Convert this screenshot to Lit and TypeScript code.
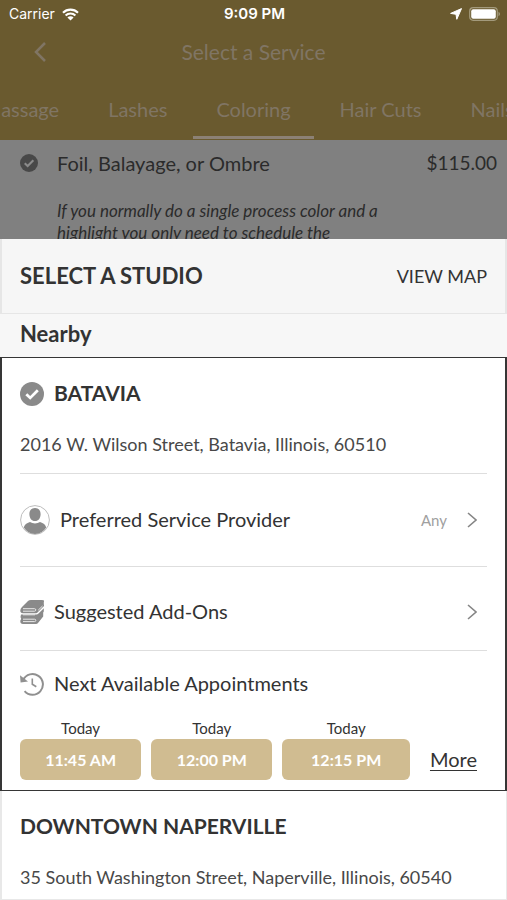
import { LitElement, html, css } from "lit";
import { customElement, property, state } from "lit/decorators.js";
import { classMap } from "lit/directives/class-map.js";

const check = html`<svg class="check" viewBox="0 0 24 24" aria-hidden="true">
  <circle cx="12" cy="12" r="12" fill="currentColor" />
  <path d="M6.3 12.2l3.900 3.700 7.600-7.600" fill="none" stroke="var(--tick, #fff)" stroke-width="2.800" />
</svg>`;

const chevron = html`<svg class="chevron" viewBox="0 0 10 16" aria-hidden="true">
  <path d="M1 1l8 7-8 7" fill="none" stroke="#858585" stroke-width="1.600" />
</svg>`;

const person = html`<svg class="person" viewBox="0 0 30 30" aria-hidden="true">
  <circle cx="15" cy="15" r="14.400" fill="#fff" stroke="#bdbdbd" stroke-width="1" />
  <path d="M15 3c3.600 0 5.800 2.700 5.600 6.400-.2 3.700-2.100 6.600-5.600 6.600s-5.400-2.900-5.600-6.600C9.200 5.700 11.400 3 15 3z" fill="#8a8a8a" />
  <path d="M3.800 22.500c.8-2.900 2.700-4.400 6.200-5.500 2.800 1.900 7.200 1.900 10 0 3.500 1.100 5.400 2.600 6.200 5.500A13.800 13.800 0 0 1 15 29 13.800 13.800 0 0 1 3.800 22.500z" fill="#8a8a8a" />
</svg>`;

const books = html`<svg class="icon" viewBox="0 0 24 24" aria-hidden="true">
  <path d="M11 0H22Q25 0 23.800 2V4.500Q24.500 6 23 7L17.500 12.500Q17 13.300 16 13.300H3Q.3 13.300 .3 10.500 .3 8.800 2 7L8 1Q9 0 11 0z" fill="#8a8a8a" />
  <path d="M1 14.600H16.500Q17.500 14.600 18.500 13.600L23.800 8.300V11.500L23.200 12.500V16.500L18 23Q17.300 24 16 24H3Q.3 24 .3 21.300 .3 20 1.200 19 0 17 1 14.600z" fill="#8a8a8a" />
  <path d="M3 8.700H14.500Q15.800 8.700 15.800 9.900T14.500 11.200H3M3 14.800H15M3 19.200H14.500Q15.800 19.200 15.800 20.400T14.500 21.600H3M18.200 10.200L22.500 6" fill="none" stroke="#e8e8e8" stroke-width="1" />
</svg>`;

const history = html`<svg class="icon" viewBox="0 0 24 24" aria-hidden="true">
  <path d="M3.200 7.800A10.400 10.400 0 1 1 4.600 19.200" fill="none" stroke="#909090" stroke-width="2" />
  <path d="M0 3.200L.6 10.600 8 9.600z" fill="#909090" />
  <path d="M12.300 6.500V12.300L16.300 14.800" fill="none" stroke="#909090" stroke-width="1.600" />
</svg>`;

@customElement("status-bar")
export class StatusBar extends LitElement {
  static styles = css`
    :host {
      display: grid;
      grid-template-columns: 1fr auto 1fr;
      align-items: center;
      height: 28px;
      padding: 0 7px 0 9px;
      color: #fff;
      font: 14px/20px Inter, sans-serif;
    }
    .left,
    .right {
      display: flex;
      align-items: center;
      gap: 7px;
    }
    .right {
      justify-content: flex-end;
    }
    .time {
      font-size: 15px;
      font-weight: 600;
    }
    .wifi {
      width: 17px;
      height: 13px;
    }
    .arrow {
      width: 12px;
      height: 12px;
    }
    .battery {
      width: 31px;
      height: 14px;
    }
  `;

  render() {
    return html`
      <div class="left">
        <span>Carrier</span>
        <svg class="wifi" viewBox="0 0 17 13" aria-hidden="true">
          <path d="M1 4.700a10.600 10.600 0 0 1 15 0M3.600 7.500a7 7 0 0 1 9.800 0" fill="none" stroke="#fff" stroke-width="2.100" />
          <path d="M8.500 12.600L5.400 9.500a4.400 4.400 0 0 1 6.200 0z" fill="#fff" />
        </svg>
      </div>
      <span class="time">9:09 PM</span>
      <div class="right">
        <svg class="arrow" viewBox="0 0 12 12" aria-hidden="true">
          <path d="M11.500 .6L6.800 11.300 6 6.300 .6 5.400z" fill="#fff" stroke="#fff" stroke-width="1" stroke-linejoin="round" />
        </svg>
        <svg class="battery" viewBox="0 0 31 14" aria-hidden="true">
          <rect x=".7" y=".7" width="27.600" height="12.600" rx="3.500" fill="none" stroke="#a39a7c" stroke-width="1.200" />
          <rect x="2.200" y="2.200" width="24.600" height="9.600" rx="2" fill="#fff" />
          <path d="M29.500 4.800q1.500 .7 1.500 2.200t-1.500 2.200z" fill="#a39a7c" />
        </svg>
      </div>
    `;
  }
}

@customElement("app-root")
export class AppRoot extends LitElement {
  @property({ type: Array }) tabs = ["Massage", "Lashes", "Coloring", "Hair Cuts", "Nails"];
  @state() private active = "Coloring";
  private slots = ["11:45 AM", "12:00 PM", "12:15 PM"];

  static styles = css`
    :host {
      display: block;
      min-height: 100vh;
      overflow: hidden;
      background: #fff;
      color: #333;
      font: 20px/24px Lato, "Open Sans", sans-serif;
    }
    * {
      box-sizing: border-box;
    }
    h1,
    h2,
    h3,
    p {
      margin: 0;
      font-weight: 400;
    }
    button {
      border: 0;
      padding: 0;
      background: none;
      color: inherit;
      font: inherit;
      white-space: nowrap;
    }
    svg {
      display: block;
      flex: none;
    }
    .top {
      background: #6a5a2f;
      color: #807564;
    }
    .nav {
      display: grid;
      grid-template-columns: 1fr auto 1fr;
      align-items: center;
      height: 48px;
      padding: 0 34px;
    }
    .title {
      font-size: 21px;
    }
    .back {
      width: 14px;
    }
    .back svg {
      width: 12px;
      height: 20px;
    }
    .tabs {
      display: grid;
      grid-template-columns: minmax(0, 1fr) auto minmax(0, 1fr);
      column-gap: 3px;
      height: 64px;
    }
    .side {
      display: flex;
      gap: 3px;
    }
    .before {
      justify-content: flex-end;
    }
    .tab {
      flex: none;
      height: 63px;
      padding: 6px 23px 0;
      border-bottom: 3px solid transparent;
    }
    .tab.on {
      border-color: #8c8175;
    }
    .service {
      display: grid;
      grid-template-columns: 18px 1fr auto;
      column-gap: 19px;
      align-items: center;
      align-content: start;
      height: 99px;
      overflow: hidden;
      padding: 11px 10px 0 20px;
      background: #808080;
      color: #2b2b2b;
      --tick: #8a8a8a;
    }
    .service .check {
      width: 18px;
      height: 18px;
      color: #484848;
    }
    .price {
      font-size: 19px;
    }
    .note {
      grid-column: 2;
      margin-top: 25px;
      font-size: 17px;
      line-height: 22px;
      font-style: italic;
    }
    .heading {
      display: flex;
      justify-content: space-between;
      align-items: center;
      height: 75px;
      padding: 0 18px;
      border: solid #e6e6e6;
      border-width: 0 2px 1px;
      background: #f6f6f6;
      font-size: 18px;
    }
    .heading h1 {
      font-size: 22px;
      font-weight: 700;
    }
    .nearby {
      padding: 8px 20px 11px;
      background: #f7f7f7;
      font-size: 22px;
      font-weight: 700;
    }
    .studio {
      padding: 24px 18px 10px;
      border: solid #e8e8e8;
      border-width: 0 1px 1px 2px;
    }
    .studio.chosen {
      border: 2px solid #363636;
      border-width: 1px 2px;
    }
    .name {
      display: flex;
      align-items: center;
      gap: 10px;
    }
    .name h3 {
      padding-bottom: 2px;
      font-size: 21px;
      line-height: 22px;
      font-weight: 700;
    }
    .address {
      margin-top: 26px;
      font-size: 18px;
      color: #484848;
    }
    .check {
      width: 24px;
      height: 24px;
      color: #8a8a8a;
    }
    .row {
      display: flex;
      align-items: center;
      gap: 10px;
      width: 100%;
      border-top: 1px solid #dedede;
    }
    .provider {
      height: 93px;
      margin-top: 17px;
    }
    .addons {
      height: 84px;
      padding-top: 6px;
    }
    .next {
      height: 67px;
    }
    .icon {
      width: 24px;
      height: 24px;
    }
    .person {
      width: 30px;
      height: 30px;
    }
    .chevron {
      width: 10px;
      height: 16px;
      margin: 0 10px;
    }
    .label {
      flex: 1;
      padding-bottom: 2px;
      text-align: left;
    }
    .value {
      font-size: 15px;
      color: #a0a0a0;
    }
    .slots {
      display: grid;
      grid-template-columns: 19fr 19fr 20fr auto;
      column-gap: 10px;
      align-items: end;
    }
    .slot {
      display: grid;
      text-align: center;
      font-size: 15px;
      line-height: 22px;
    }
    .time {
      height: 41px;
      border-radius: 6px;
      background: #d0bc91;
      color: #fff;
      font-size: 16px;
      font-weight: 700;
    }
    .more {
      padding: 0 10px;
      line-height: 41px;
      color: inherit;
      text-underline-offset: 3px;
      text-decoration-thickness: 1px;
    }
  `;

  private tab(name: string) {
    return html`<button
      class=${classMap({ tab: true, on: name === this.active })}
      @click=${() => (this.active = name)}
    >${name}</button>`;
  }

  render() {
    const at = this.tabs.indexOf(this.active);
    return html`
      <header class="top">
        <status-bar></status-bar>
        <div class="nav">
          <button class="back" aria-label="Back">
            <svg viewBox="0 0 12 20" aria-hidden="true">
              <path d="M11 1L2 10l9 9" fill="none" stroke="currentColor" stroke-width="2.500" />
            </svg>
          </button>
          <span class="title">Select a Service</span>
        </div>
        <nav class="tabs">
          <div class="side before">${this.tabs.slice(0, at).map((t) => this.tab(t))}</div>
          ${this.tab(this.active)}
          <div class="side">${this.tabs.slice(at + 1).map((t) => this.tab(t))}</div>
        </nav>
      </header>
      <section class="service">
        ${check}
        <span>Foil, Balayage, or Ombre</span>
        <span class="price">$115.00</span>
        <p class="note">If you normally do a single process color and a highlight you only need to schedule the</p>
      </section>
      <main>
        <div class="heading">
          <h1>SELECT A STUDIO</h1>
          <button>VIEW MAP</button>
        </div>
        <h2 class="nearby">Nearby</h2>
        <article class="studio chosen">
          <div class="name">${check}<h3>BATAVIA</h3></div>
          <p class="address">2016 W. Wilson Street, Batavia, Illinois, 60510</p>
          <button class="row provider">
            ${person}<span class="label">Preferred Service Provider</span><span class="value">Any</span>${chevron}
          </button>
          <button class="row addons">${books}<span class="label">Suggested Add-Ons</span>${chevron}</button>
          <div class="row next">${history}<span class="label">Next Available Appointments</span></div>
          <div class="slots">
            ${this.slots.map((s) => html`<label class="slot">Today<button class="time">${s}</button></label>`)}
            <a class="more" href="#more">More</a>
          </div>
        </article>
        <article class="studio">
          <div class="name"><h3>DOWNTOWN NAPERVILLE</h3></div>
          <p class="address">35 South Washington Street, Naperville, Illinois, 60540</p>
        </article>
      </main>
    `;
  }
}
